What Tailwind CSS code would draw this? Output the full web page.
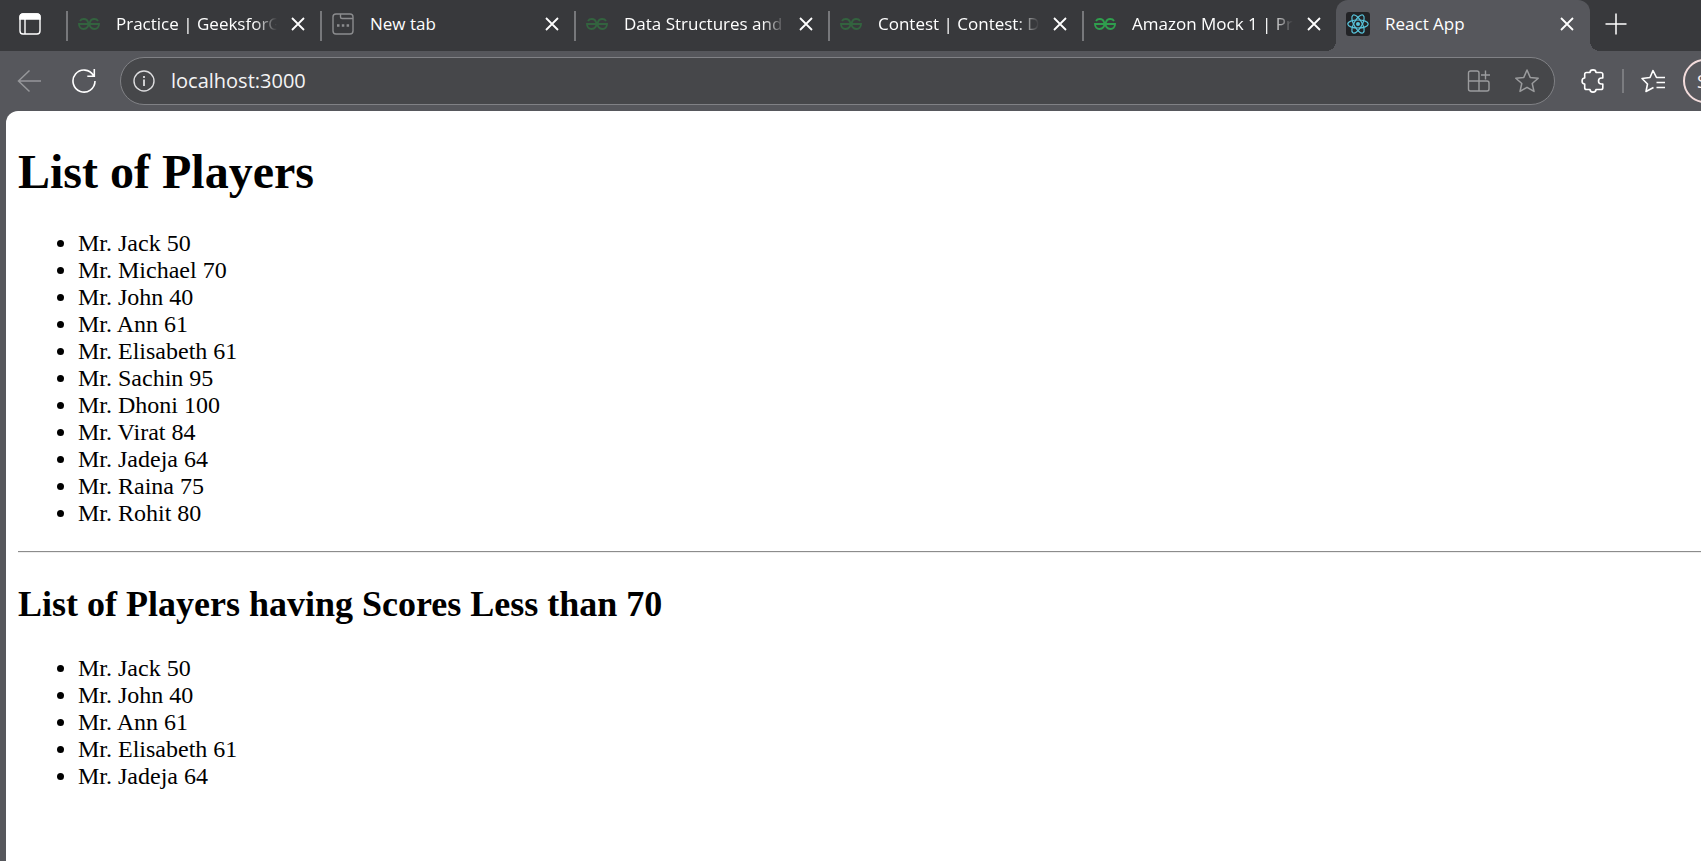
<!DOCTYPE html>
<html lang="en">
<head>
<meta charset="utf-8">
<title>React App</title>
<script src="https://cdn.jsdelivr.net/npm/@tailwindcss/browser@4"></script>
</head>
<body class="flex min-h-screen flex-col overflow-x-hidden bg-[#56575c] font-['Open_Sans','Noto_Sans',sans-serif] text-white">

<svg class="hidden" aria-hidden="true">
  <symbol id="close" viewBox="0 0 14 14"><path d="M1 1l12 12M13 1L1 13" fill="none" stroke="currentColor" stroke-width="1.8"/></symbol>
  <symbol id="gfg" viewBox="0 0 22 12"><path d="M2 3C3.500 .5 8.500 0 10 4C11.500 8.500 8.500 11 5.500 11C3 11 1 9 1 6H21C21 9 19 11 16.500 11C13.500 11 10.500 8.500 12 4C13.500 0 18.500 .5 20 3" fill="none" stroke="currentColor" stroke-width="1.900"/></symbol>
</svg>

<header class="shrink-0">
  <nav class="flex h-[51px] bg-[#38393c]" aria-label="Tabs">
    <button class="flex w-[66px] shrink-0 items-center pb-1 pl-[19px]" aria-label="Tab actions">
      <svg class="size-[22px]" viewBox="0 0 22 22" fill="none" stroke="#fff" stroke-width="1.400"><rect x="1" y="1" width="20" height="20" rx="3"/><path d="M1 6V4a3 3 0 0 1 3-3h14a3 3 0 0 1 3 3v2z" fill="#fff"/><path d="M6 6v15"/></svg>
    </button>

    <div class="flex max-w-[254px] min-w-0 flex-1 items-center pb-1">
      <span class="mt-1 h-[30px] w-[2px] shrink-0 bg-[#77787b]"></span>
      <svg class="ml-2.5 h-3 w-[22px] shrink-0 text-[#33633f]"><use href="#gfg"/></svg>
      <a href="#" class="ml-4 min-w-0 flex-1 overflow-hidden text-[17px] leading-6 whitespace-nowrap [mask-image:linear-gradient(to_right,black_138px,rgba(0,0,0,0.6)_148px,transparent)]">Practice | GeeksforGe</a>
      <button class="mr-[15px] ml-3.5 shrink-0" aria-label="Close tab"><svg class="size-3.5"><use href="#close"/></svg></button>
    </div>

    <div class="flex max-w-[254px] min-w-0 flex-1 items-center pb-1">
      <span class="mt-1 h-[30px] w-[2px] shrink-0 bg-[#77787b]"></span>
      <svg class="ml-2.5 size-[22px] shrink-0" viewBox="0 0 22 22" fill="none" stroke="#8b8c8e" stroke-width="1.400"><rect x="1" y="1" width="20" height="20" rx="3"/><path d="M8.500 1v3a1.500 1.500 0 0 0 1.500 1.500h11"/><path d="M5 12.500h2.500M9.800 12.500h2.500M14.600 12.500h2.500" stroke-width="2.400"/></svg>
      <a href="#" class="ml-4 min-w-0 flex-1 overflow-hidden text-[17px] leading-6 whitespace-nowrap">New tab</a>
      <button class="mr-[15px] ml-3.5 shrink-0" aria-label="Close tab"><svg class="size-3.5"><use href="#close"/></svg></button>
    </div>

    <div class="flex max-w-[254px] min-w-0 flex-1 items-center pb-1">
      <span class="mt-1 h-[30px] w-[2px] shrink-0 bg-[#77787b]"></span>
      <svg class="ml-2.5 h-3 w-[22px] shrink-0 text-[#33633f]"><use href="#gfg"/></svg>
      <a href="#" class="ml-4 min-w-0 flex-1 overflow-hidden text-[17px] leading-6 whitespace-nowrap [mask-image:linear-gradient(to_right,black_138px,rgba(0,0,0,0.6)_148px,transparent)]">Data Structures and</a>
      <button class="mr-[15px] ml-3.5 shrink-0" aria-label="Close tab"><svg class="size-3.5"><use href="#close"/></svg></button>
    </div>

    <div class="flex max-w-[254px] min-w-0 flex-1 items-center pb-1">
      <span class="mt-1 h-[30px] w-[2px] shrink-0 bg-[#77787b]"></span>
      <svg class="ml-2.5 h-3 w-[22px] shrink-0 text-[#33633f]"><use href="#gfg"/></svg>
      <a href="#" class="ml-4 min-w-0 flex-1 overflow-hidden text-[17px] leading-6 whitespace-nowrap [mask-image:linear-gradient(to_right,black_138px,rgba(0,0,0,0.6)_148px,transparent)]">Contest | Contest: Di</a>
      <button class="mr-[15px] ml-3.5 shrink-0" aria-label="Close tab"><svg class="size-3.5"><use href="#close"/></svg></button>
    </div>

    <div class="flex max-w-[254px] min-w-0 flex-1 items-center pb-1">
      <span class="mt-1 h-[30px] w-[2px] shrink-0 bg-[#77787b]"></span>
      <svg class="ml-2.5 h-3 w-[22px] shrink-0 text-[#2f9e4d]"><use href="#gfg"/></svg>
      <a href="#" class="ml-4 min-w-0 flex-1 overflow-hidden text-[17px] leading-6 whitespace-nowrap [mask-image:linear-gradient(to_right,black_138px,rgba(0,0,0,0.6)_148px,transparent)]">Amazon Mock 1 | Pra</a>
      <button class="mr-[15px] ml-3.5 shrink-0" aria-label="Close tab"><svg class="size-3.5"><use href="#close"/></svg></button>
    </div>

    <div class="relative flex max-w-[254px] min-w-0 flex-1 items-center rounded-t-xl bg-[#56575c] pb-1 before:absolute before:bottom-0 before:-left-2.5 before:size-2.5 before:bg-[radial-gradient(circle_at_0_0,transparent_10px,#56575c_10px)] after:absolute after:-right-2.5 after:bottom-0 after:size-2.5 after:bg-[radial-gradient(circle_at_100%_0,transparent_10px,#56575c_10px)]">
      <svg class="ml-[10px] size-6 shrink-0" viewBox="0 0 24 24" fill="none" stroke="#58c4dc" stroke-width="1.200"><rect width="24" height="24" rx="3" fill="#222326" stroke="none"/><circle cx="12" cy="12" r="2" fill="#58c4dc" stroke="none"/><ellipse cx="12" cy="12" rx="10.200" ry="4"/><ellipse cx="12" cy="12" rx="10.200" ry="4" transform="rotate(60 12 12)"/><ellipse cx="12" cy="12" rx="10.200" ry="4" transform="rotate(120 12 12)"/></svg>
      <a href="#" aria-current="page" class="ml-[15px] min-w-0 flex-1 overflow-hidden text-[17px] leading-6 whitespace-nowrap">React App</a>
      <button class="mr-4 ml-3.5 shrink-0" aria-label="Close tab"><svg class="size-3.5"><use href="#close"/></svg></button>
    </div>

    <button class="ml-[15px] shrink-0 pb-1" aria-label="New tab"><svg class="size-[22px]" viewBox="0 0 22 22"><path d="M11 0.500v21M.5 11h21" stroke="#fff" stroke-width="1.500"/></svg></button>
  </nav>

  <div class="flex h-[60px] items-center">
    <button class="ml-[17px] shrink-0" aria-label="Back"><svg class="size-6" viewBox="0 0 24 24" fill="none" stroke="#96979a" stroke-width="1.500"><path d="M25 12H1.500M12.500 1.500L1.500 12l11 10.500"/></svg></button>
    <button class="ml-[31px] shrink-0" aria-label="Refresh"><svg class="size-6" viewBox="0 0 24 24" fill="none" stroke="#fff" stroke-width="1.600"><path d="M21.500 6.500A11 11 0 1 0 23 12M22.300 0v7.200h-7"/></svg></button>
    <div class="ml-6 flex h-12 min-w-0 flex-1 items-center rounded-full border border-[#808185] bg-[#46474a]">
      <svg class="ml-3 size-[22px] shrink-0" viewBox="0 0 22 22" fill="none" stroke="#dddddf" stroke-width="1.400"><circle cx="11" cy="11" r="10"/><path d="M11 9.500v6.500M11 6v2" stroke-width="1.800"/></svg>
      <input type="text" aria-label="Address" value="localhost:3000" class="ml-4 min-w-0 flex-1 bg-transparent text-xl leading-7 text-[#f4f4f5] outline-none">
      <button class="shrink-0" aria-label="Apps"><svg class="size-6" viewBox="0 0 24 24" fill="none" stroke="#9b9c9e" stroke-width="1.400"><path d="M12 12V4a2 2 0 0 0-2-2H3.500a2 2 0 0 0-2 2v16a2 2 0 0 0 2 2H20a2 2 0 0 0 2-2v-6a2 2 0 0 0-2-2zM1.500 12H12v10M18.500 1.500v9M14 6h9"/></svg></button>
      <button class="mr-[15px] ml-6 shrink-0" aria-label="Favorite"><svg class="size-6" viewBox="0 0 24 24" fill="none" stroke="#9b9c9e" stroke-width="1.500" stroke-linejoin="round"><path d="M12 1l3.200 7.400 8 .8-6 5.300 1.800 7.900-7-4.100-7 4.100 1.800-7.900-6-5.300 8-.8z"/></svg></button>
    </div>
    <button class="ml-[26px] shrink-0" aria-label="Extensions"><svg class="size-6" viewBox="0 0 24 24" fill="none" stroke="#fff" stroke-width="1.600" stroke-linejoin="round"><path d="M5.500 3.500H9C9 0 15 0 15 3.500H20A1.800 1.800 0 0 1 21.800 5.300V9H20.500C16.500 9 16.500 15 20.500 15H21.800V18.700A1.800 1.800 0 0 1 20 20.500H15C15 24 9 24 9 20.500H5.500A1.800 1.800 0 0 1 3.700 18.700V15C.2 15 .2 9 3.700 9V5.300A1.800 1.800 0 0 1 5.500 3.500z"/></svg></button>
    <span class="ml-[17px] h-6 w-[2px] shrink-0 bg-[#7b7c80]"></span>
    <button class="ml-[17px] shrink-0" aria-label="Favorites"><svg class="size-6" viewBox="0 0 24 24" fill="none" stroke="#fff" stroke-width="1.600" stroke-linejoin="round"><path d="M24.500 8.500H15.500L12 1.500 9 8.500 1 9.500l5.500 5.500L5 22.500l7.500-4M15.500 13.500H24.500M15.500 18.500H24.500"/></svg></button>
    <button class="-mr-[26px] ml-[18px] size-11 shrink-0 rounded-full border-2 border-[#f3dcdc] pl-3 text-left text-lg text-[#fdeeee]" aria-label="Profile">S</button>
  </div>
</header>

<main class="ml-1.5 flex-1 rounded-tl-xl bg-white pt-[33px] pl-3 font-['Liberation_Serif',serif] text-2xl leading-[27px] text-black">
  <h1 class="text-5xl leading-[55px] font-bold">List of Players</h1>
  <ul class="mt-[31px] list-disc pl-[60px]">
    <li>Mr. Jack 50</li>
    <li>Mr. Michael 70</li>
    <li>Mr. John 40</li>
    <li>Mr. Ann 61</li>
    <li>Mr. Elisabeth 61</li>
    <li>Mr. Sachin 95</li>
    <li>Mr. Dhoni 100</li>
    <li>Mr. Virat 84</li>
    <li>Mr. Jadeja 64</li>
    <li>Mr. Raina 75</li>
    <li>Mr. Rohit 80</li>
  </ul>
  <hr class="mt-6 h-[2px] border-t border-b border-t-[#8c8c8c] border-b-[#eeeeee]">
  <h2 class="mt-[30px] text-4xl leading-[42px] font-bold">List of Players having Scores Less than 70</h2>
  <ul class="mt-[30px] list-disc pl-[60px]">
    <li>Mr. Jack 50</li>
    <li>Mr. John 40</li>
    <li>Mr. Ann 61</li>
    <li>Mr. Elisabeth 61</li>
    <li>Mr. Jadeja 64</li>
  </ul>
</main>
</body>
</html>
